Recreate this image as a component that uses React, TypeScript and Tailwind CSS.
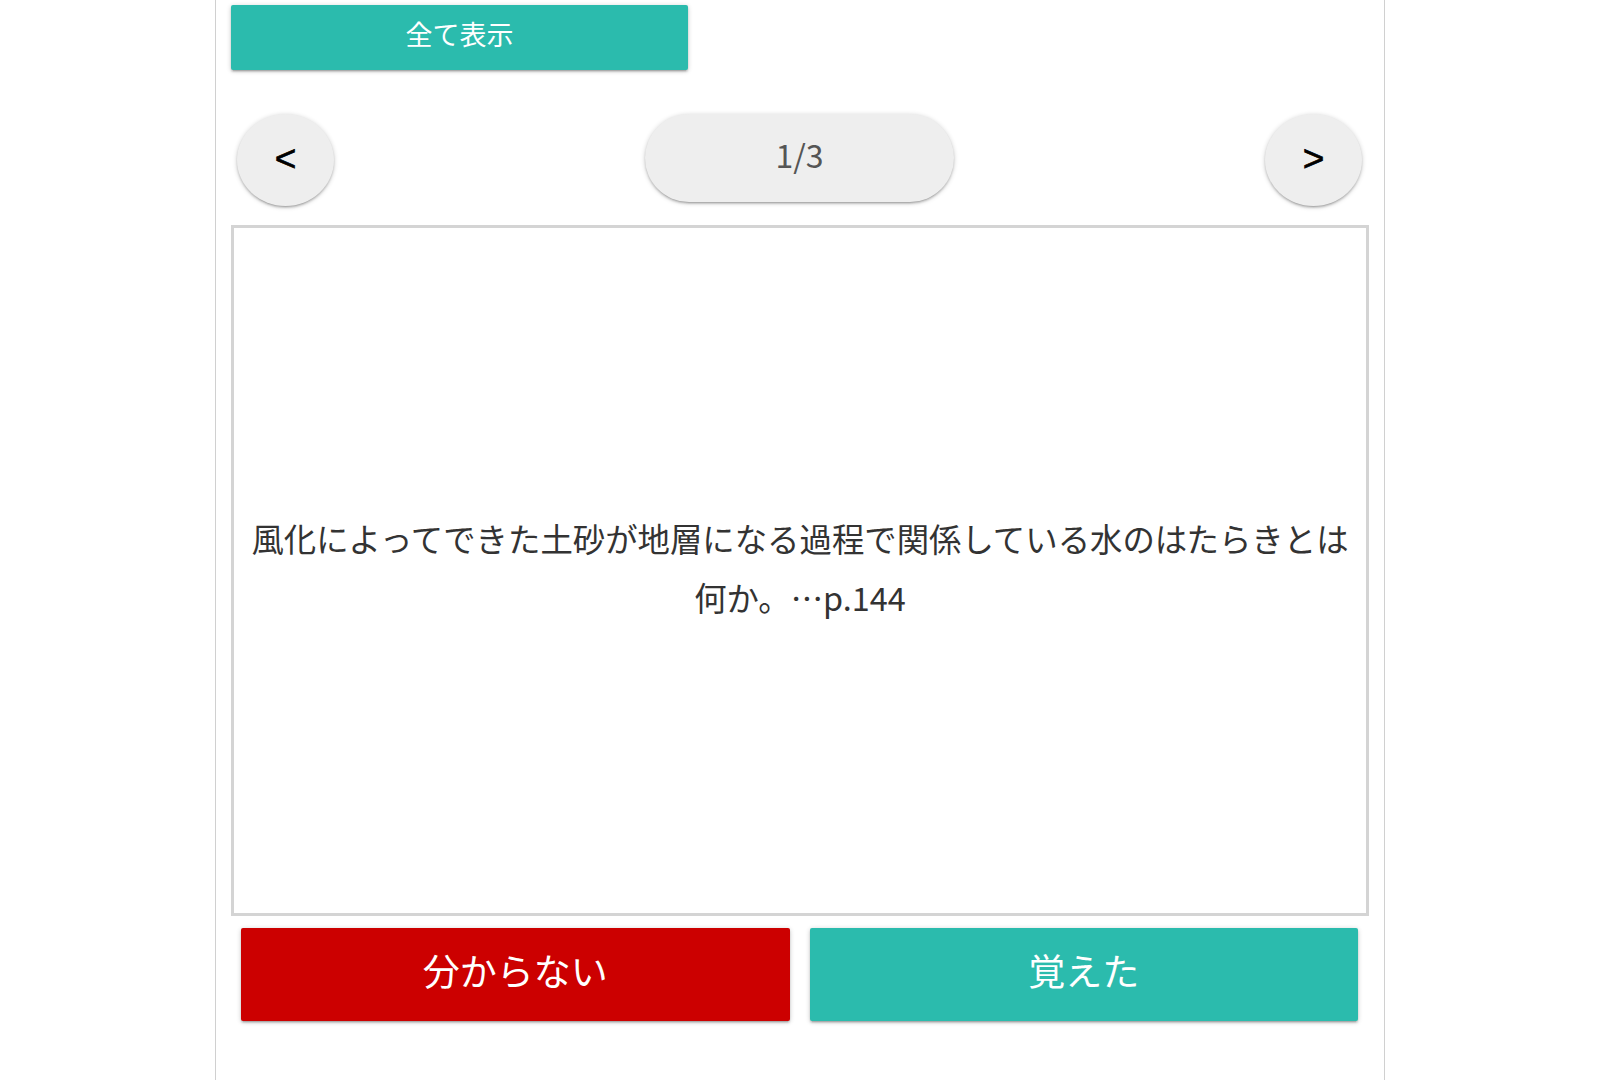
const jp = { fontFamily: '"Noto Sans CJK JP", "Noto Sans", sans-serif' };

const lift =
  'shadow-[0_2px_2px_0_rgba(0,0,0,0.14),0_3px_1px_-2px_rgba(0,0,0,0.12),0_1px_5px_0_rgba(0,0,0,0.2)]';

const arrow = { fontFamily: '"Liberation Sans", Arial, sans-serif' };

export default function App() {
  return (
    <div className="min-h-screen bg-white" style={jp}>
      <div className="mx-auto min-h-screen w-[1170px] border-x border-[#d0d0d0] px-[15px] pt-[5px] pb-10">
        <button
          className={`flex h-[65px] w-[457px] items-center justify-center rounded-[2px] bg-[#2bbbad] pb-[6px] text-[27px] text-white ${lift}`}
        >
          全て表示
        </button>

        <div className="mt-[44px] flex h-[92px] items-start justify-between pl-[6px] pr-[7px]">
          <button
            className={`flex h-[92px] w-[97px] items-center justify-center rounded-[50%] bg-[#eeeeee] pb-[2px] text-[37px] text-black [-webkit-text-stroke:0.7px_black] ${lift}`}
            style={arrow}
          >
            &lt;
          </button>
          <div
            className={`flex h-[88px] w-[309px] items-center justify-center rounded-full bg-[#eeeeee] pb-2 text-[32px] text-[#555555] ${lift}`}
          >
            1/3
          </div>
          <button
            className={`flex h-[92px] w-[97px] items-center justify-center rounded-[50%] bg-[#eeeeee] pb-[2px] text-[37px] text-black [-webkit-text-stroke:0.7px_black] ${lift}`}
            style={arrow}
          >
            &gt;
          </button>
        </div>

        <div className="mt-[19px] flex h-[691px] w-[1138px] items-center justify-center border-[3px] border-[#d4d4d4] px-2 pb-[8px]">
          <p className="text-center text-[32.4px] leading-[59px] text-[#333333]">
            風化によってできた土砂が地層になる過程で関係している水のはたらきとは何か。…p.144
          </p>
        </div>

        <div className="mt-[12px] flex gap-[20px] pl-[10px] pr-[11px]">
          <button
            className={`flex h-[93px] flex-1 items-center justify-center rounded-[2px] bg-[#cc0000] pb-[8px] text-[37px] text-white ${lift}`}
          >
            分からない
          </button>
          <button
            className={`flex h-[93px] flex-1 items-center justify-center rounded-[2px] bg-[#2bbbad] pb-[8px] text-[37px] text-white ${lift}`}
          >
            覚えた
          </button>
        </div>
      </div>
    </div>
  );
}
